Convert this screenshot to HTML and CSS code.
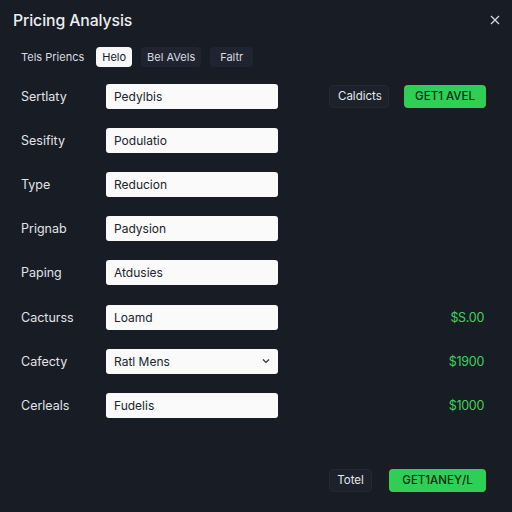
FILE: index.html
```html
<!DOCTYPE html>
<html>
<head>
<meta charset="utf-8">
<link rel="stylesheet" href="styles.css">
</head>
<body>
<div class="panel">
  <div class="header">
    <h1 class="title">Pricing Analysis</h1>
    <span class="close">
      <svg width="10" height="10" viewBox="0 0 10 10"><path d="M1 1L9 9M9 1L1 9" stroke="#d6d9df" stroke-width="1.3" fill="none"/></svg>
    </span>
  </div>
  <div class="tabs">
    <span class="tab plain">Tels Priencs</span>
    <span class="tab active">Helo</span>
    <span class="tab dark">Bel AVels</span>
    <span class="tab dark faltr">Faltr</span>
  </div>
  <div class="rows">
    <div class="row">
      <span class="label">Sertlaty</span>
      <div class="input">Pedylbis</div>
      <div class="extra">
        <span class="btn ghost">Caldicts</span>
        <span class="btn green">GET1 AVEL</span>
      </div>
    </div>
    <div class="row">
      <span class="label">Sesifity</span>
      <div class="input">Podulatio</div>
      <div class="extra"></div>
    </div>
    <div class="row">
      <span class="label">Type</span>
      <div class="input">Reducion</div>
      <div class="extra"></div>
    </div>
    <div class="row">
      <span class="label">Prignab</span>
      <div class="input">Padysion</div>
      <div class="extra"></div>
    </div>
    <div class="row">
      <span class="label">Paping</span>
      <div class="input">Atdusies</div>
      <div class="extra"></div>
    </div>
    <div class="row">
      <span class="label">Cacturss</span>
      <div class="input">Loamd</div>
      <div class="extra price">$S.00</div>
    </div>
    <div class="row">
      <span class="label">Cafecty</span>
      <div class="input select">Ratl Mens
        <svg width="8" height="6" viewBox="0 0 8 6"><path d="M1 1.5L4 4.5L7 1.5" stroke="#333" stroke-width="1.2" fill="none"/></svg>
      </div>
      <div class="extra price">$1900</div>
    </div>
    <div class="row">
      <span class="label">Cerleals</span>
      <div class="input">Fudelis</div>
      <div class="extra price">$1000</div>
    </div>
  </div>
  <div class="footer">
    <span class="btn ghost total">Totel</span>
    <span class="btn green wide">GET1ANEY/L</span>
  </div>
</div>
</body>
</html>
```
FILE: styles.css
```css
html, body {
  margin: 0;
  padding: 0;
  background: #181c25;
  width: 512px;
  height: 512px;
  overflow: hidden;
}
body {
  font-family: "Inter", "Liberation Sans", sans-serif;
  color: #e4e6ea;
}
.panel {
  width: 512px;
  height: 512px;
  box-sizing: border-box;
  padding: 8px 26px 0 21px;
  display: flex;
  flex-direction: column;
}
.header {
  display: flex;
  justify-content: space-between;
  align-items: center;
  height: 24px;
  margin-left: -8px;
  margin-right: -15px;
}
.title {
  margin: 0;
  font-size: 15.8px;
  font-weight: 500;
  color: #eceef1;
  letter-spacing: -0.1px;
}
.close {
  display: flex;
  width: 12px;
  height: 12px;
  align-items: center;
  justify-content: center;
}
.tabs {
  display: flex;
  align-items: center;
  gap: 9px;
  margin-top: 15px;
  height: 20px;
}
.tab {
  font-size: 11px;
  padding: 0 6px;
  height: 20px;
  line-height: 20px;
  border-radius: 4px;
  color: #d8dbe0;
}
.tab.plain {
  padding: 0;
  margin-right: 3px;
}
.tab.active {
  background: #f7f7f8;
  color: #15181e;
  padding: 0 6px;
}
.tab.dark {
  background: #1f2430;
}
.tab.faltr {
  padding: 0 10px;
}
.rows {
  display: flex;
  flex-direction: column;
  margin-top: 7px;
}
.row {
  display: grid;
  grid-template-columns: 85px 172px 1fr;
  align-items: center;
  height: 44.2px;
}
.label {
  font-size: 12.5px;
  color: #e2e4e8;
}
.input {
  background: #fafafa;
  border-radius: 3px;
  height: 25px;
  box-sizing: border-box;
  padding: 0 8px;
  display: flex;
  align-items: center;
  justify-content: space-between;
  font-size: 12px;
  color: #20232a;
}
.extra {
  display: flex;
  justify-content: flex-end;
  align-items: center;
  gap: 15px;
}
.price {
  font-size: 12.5px;
  color: #3ed35e;
  letter-spacing: -0.3px;
  padding-right: 2px;
}
.btn {
  font-size: 11.5px;
  height: 23px;
  line-height: 23px;
  border-radius: 4px;
  padding: 0 8px;
  box-sizing: border-box;
  text-align: center;
}
.btn.ghost {
  background: #1c212b;
  border: 1px solid #232834;
  line-height: 21px;
  color: #e6e8eb;
  width: 60px;
}
.btn.green {
  background: #2fcf56;
  color: #0f2a16;
  width: 82px;
  font-weight: 500;
}
.footer {
  margin-top: auto;
  margin-bottom: 20px;
  display: flex;
  justify-content: flex-end;
  gap: 17px;
}
.btn.total {
  width: 43px;
  padding: 0;
}
.btn.wide {
  width: 97px;
}
```
